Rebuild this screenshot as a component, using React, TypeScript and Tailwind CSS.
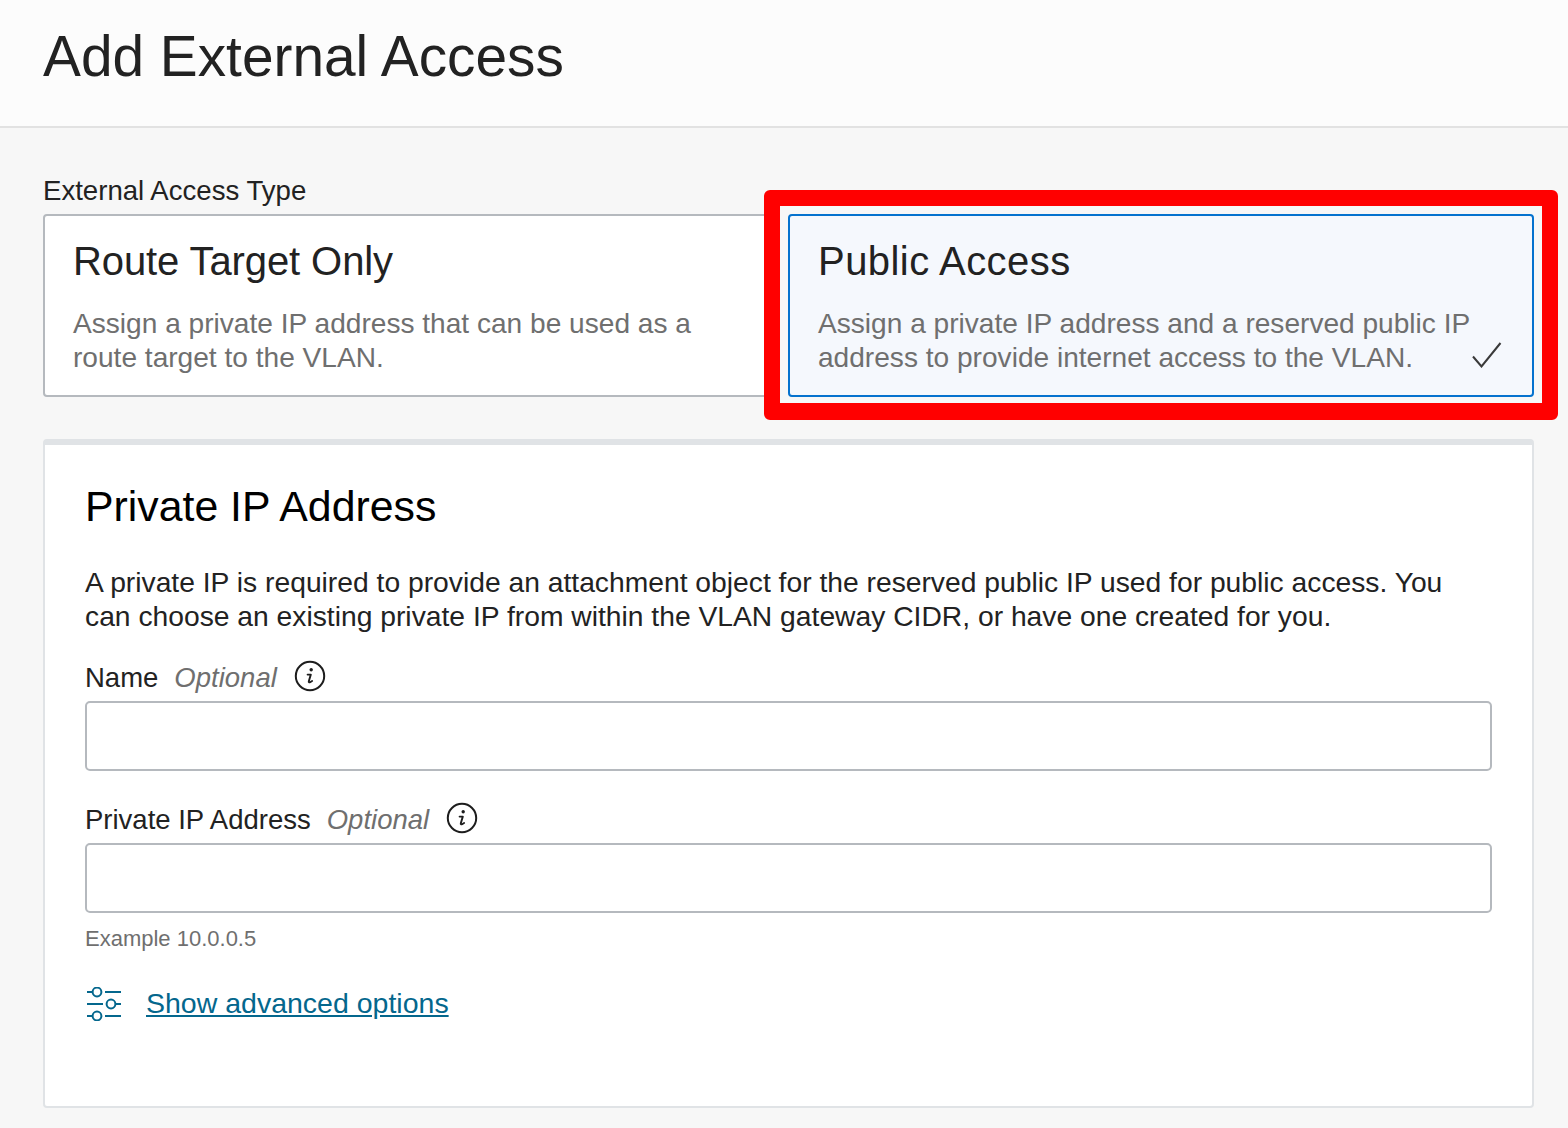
const FONT = "font-['Liberation_Sans',Arial,sans-serif]";

function InfoIcon() {
  return (
    <svg width="32" height="32" viewBox="0 0 32 32" fill="none" className="shrink-0">
      <circle cx="16" cy="16" r="14.2" stroke="#1d1d1d" strokeWidth="2" />
      <circle cx="17.2" cy="9.8" r="1.7" fill="#1d1d1d" />
      <path d="M13.6 14.6h3.2l-2 6.6c-.3 1 .5 1.4 1.3 1l2-1.2" stroke="#1d1d1d" strokeWidth="1.9" strokeLinecap="round" strokeLinejoin="round" />
    </svg>
  );
}

function SlidersIcon() {
  return (
    <svg width="36" height="34" viewBox="0 0 36 34" fill="none" stroke="#04678d" strokeWidth="2" className="ml-px shrink-0">
      <path d="M1 5h5M19 5h16" />
      <circle cx="11" cy="5" r="4.4" />
      <path d="M1 17h16M30 17h5" />
      <circle cx="25" cy="17" r="4.4" />
      <path d="M1 29h5M19 29h16" />
      <circle cx="11" cy="29" r="4.4" />
    </svg>
  );
}

function TypeCard({ title, text, selected }: { title: string; text: string[]; selected?: boolean }) {
  return (
    <div
      className={`relative h-[183px] rounded-[4px] border-2 pl-[28px] pt-[21px] ${
        selected ? "flex-1 border-[#0572ce] bg-[#f5f8fd]" : "w-[729px] shrink-0 border-[#b5b9be] bg-white"
      }`}
    >
      <h2 className={`text-[40px] leading-[48px] text-[#222222] ${selected ? "tracking-[0.45px]" : "tracking-[-0.1px]"}`}>{title}</h2>
      <p className="mt-[22px] whitespace-nowrap text-[28.1px] leading-[34px] text-[#6f6f6f]">
        {text[0]}
        <br />
        {text[1]}
      </p>
      {selected && (
        <svg width="30" height="26" viewBox="0 0 30 26" fill="none" className="absolute right-[30px] bottom-[27px]">
          <path d="M1 14.5 9.5 24.5 28.5 1" stroke="#3a3a3a" strokeWidth="2" />
        </svg>
      )}
    </div>
  );
}

function Field({ label, hint }: { label: string; hint?: string }) {
  return (
    <div>
      <div className="flex h-[34px] items-center text-[27.5px] leading-[34px]">
        <span className="pt-[2px] text-[#222222]">{label}</span>
        <em className="ml-[16px] pt-[2px] text-[#6f6f6f]">Optional</em>
        <span className="ml-[17px] -mt-[2px]">
          <InfoIcon />
        </span>
      </div>
      <div className="mt-[7px] h-[70px] rounded-[5px] border-2 border-[#b5b9be] bg-white" />
      {hint && <p className="mt-[13px] text-[22px] leading-[26px] text-[#6f6f6f]">{hint}</p>}
    </div>
  );
}

export default function App() {
  return (
    <div className={`${FONT} relative h-[1128px] w-[1568px] overflow-hidden bg-[#f7f7f7]`}>
      <header className="h-[128px] border-b-2 border-[#e2e2e2] bg-[#fcfcfc] pl-[43px] pt-[23px]">
        <h1 className="text-[56.8px] leading-[68px] text-[#222222]">Add External Access</h1>
      </header>

      <main className="pl-[43px] pr-[34px] pt-[46px]">
        <div className="text-[27.6px] leading-[34px] text-[#222222]">External Access Type</div>
        <div className="mt-[6px] flex gap-[16px]">
          <TypeCard
            title="Route Target Only"
            text={["Assign a private IP address that can be used as a", "route target to the VLAN."]}
          />
          <TypeCard
            selected
            title="Public Access"
            text={["Assign a private IP address and a reserved public IP", "address to provide internet access to the VLAN."]}
          />
        </div>

        <section className="mt-[42px] h-[669px] rounded-[4px] border-2 border-t-[6px] border-[#e0e3e6] bg-white px-[40px] pt-[36px]">
          <h2 className="text-[42.8px] leading-[50px] text-black">Private IP Address</h2>
          <p className="mt-[34px] whitespace-nowrap text-[28.25px] leading-[34px] text-[#222222]">
            A private IP is required to provide an attachment object for the reserved public IP used for public access. You
            <br />
            can choose an existing private IP from within the VLAN gateway CIDR, or have one created for you.
          </p>
          <div className="mt-[27px] flex flex-col gap-[31px]">
            <Field label="Name" />
            <Field label="Private IP Address" hint="Example 10.0.0.5" />
          </div>
          <div className="mt-[35px] flex items-center gap-[24px]">
            <SlidersIcon />
            <a className="-mt-[2px] text-[28.5px] leading-[34px] text-[#04678d] underline">Show advanced options</a>
          </div>
        </section>
      </main>

      {/* annotation drawn over the screenshot */}
      <div className="absolute left-[764px] top-[190px] h-[230px] w-[794px] rounded-[6px] border-[16px] border-b-[17px] border-[#ff0000]" />
    </div>
  );
}
